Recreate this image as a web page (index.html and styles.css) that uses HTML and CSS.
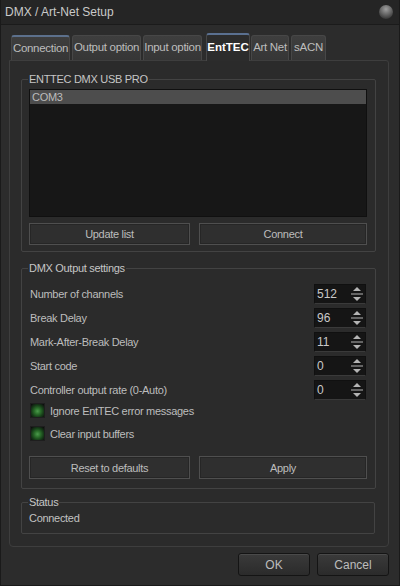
FILE: index.html
```html
<!DOCTYPE html>
<html>
<head>
<meta charset="utf-8">
<link rel="stylesheet" href="styles.css">
</head>
<body>
<div class="window">
  <div class="titlebar">
    <span class="title">DMX / Art-Net Setup</span>
    <span class="knob"></span>
  </div>
  <div class="tabs">
    <div class="tab hot t-conn">Connection</div>
    <div class="tab t-out">Output option</div>
    <div class="tab t-in">Input option</div>
    <div class="tab active t-ent">EntTEC</div>
    <div class="tab t-art">Art Net</div>
    <div class="tab t-sacn">sACN</div>
  </div>
  <div class="panel">
    <fieldset class="group g-usb">
      <legend>ENTTEC DMX USB PRO</legend>
      <div class="listbox">
        <div class="item sel">COM3</div>
      </div>
      <div class="btnrow">
        <button class="btn">Update list</button>
        <button class="btn">Connect</button>
      </div>
    </fieldset>
    <fieldset class="group g-dmx">
      <legend>DMX Output settings</legend>
      <div class="rows">
        <div class="row"><span class="label">Number of channels</span><div class="spin"><span class="val">512</span><svg class="arrows" width="14" height="18" viewBox="0 0 14 18"><polygon points="7,2 3,6 11,6"/><rect x="1" y="8.5" width="12" height="1"/><polygon points="3,12 11,12 7,16"/></svg></div></div>
        <div class="row"><span class="label">Break Delay</span><div class="spin"><span class="val">96</span><svg class="arrows" width="14" height="18" viewBox="0 0 14 18"><polygon points="7,2 3,6 11,6"/><rect x="1" y="8.5" width="12" height="1"/><polygon points="3,12 11,12 7,16"/></svg></div></div>
        <div class="row"><span class="label">Mark-After-Break Delay</span><div class="spin"><span class="val">11</span><svg class="arrows" width="14" height="18" viewBox="0 0 14 18"><polygon points="7,2 3,6 11,6"/><rect x="1" y="8.5" width="12" height="1"/><polygon points="3,12 11,12 7,16"/></svg></div></div>
        <div class="row"><span class="label">Start code</span><div class="spin"><span class="val">0</span><svg class="arrows" width="14" height="18" viewBox="0 0 14 18"><polygon points="7,2 3,6 11,6"/><rect x="1" y="8.5" width="12" height="1"/><polygon points="3,12 11,12 7,16"/></svg></div></div>
        <div class="row"><span class="label">Controller output rate (0-Auto)</span><div class="spin"><span class="val">0</span><svg class="arrows" width="14" height="18" viewBox="0 0 14 18"><polygon points="7,2 3,6 11,6"/><rect x="1" y="8.5" width="12" height="1"/><polygon points="3,12 11,12 7,16"/></svg></div></div>
      </div>
      <div class="checks">
        <div class="check"><span class="box"></span><span>Ignore EntTEC error messages</span></div>
        <div class="check"><span class="box"></span><span>Clear input buffers</span></div>
      </div>
      <div class="btnrow btnrow2">
        <button class="btn">Reset to defaults</button>
        <button class="btn">Apply</button>
      </div>
    </fieldset>
    <fieldset class="group g-status">
      <legend>Status</legend>
      <div class="status">Connected</div>
    </fieldset>
  </div>
  <div class="footer">
    <button class="fbtn">OK</button>
    <button class="fbtn">Cancel</button>
  </div>
</div>
</body>
</html>
```
FILE: styles.css
```css
* { box-sizing: border-box; }
html, body { margin: 0; padding: 0; background: #2b2b2b; }
body { font-family: "Liberation Sans", Arial, sans-serif; font-size: 11px; color: #bdbdbd; letter-spacing: -0.3px; }

.window {
  width: 400px;
  height: 586px;
  background: #2c2c2c;
  border: 1px solid #1a1a1a;
  border-top: none;
  display: flex;
  flex-direction: column;
}

.titlebar {
  height: 25px;
  background: #252525;
  border-bottom: 1px solid #1b1b1b;
  display: flex;
  align-items: center;
  justify-content: space-between;
  padding: 0 4px 0 4px;
}
.title { font-size: 12px; color: #cacaca; letter-spacing: 0; }
.knob {
  width: 14px; height: 14px; border-radius: 50%;
  background: radial-gradient(circle at 50% 30%, #a0a0a0 0, #666 45%, #383838 80%);
  margin-right: 2px;
}

.tabs {
  display: flex;
  align-items: flex-end;
  height: 27px;
  margin-top: 8px;
  padding-left: 10px;
  position: relative;
  z-index: 1;
}
.tab {
  height: 25px;
  line-height: 23px;
  text-align: center;
  border: 1px solid #474747;
  border-bottom: none;
  border-radius: 3px 3px 0 0;
  background: linear-gradient(#3e3e3e, #363636);
  color: #bdbdbd;
  margin-right: 2px;
  white-space: nowrap;
  font-size: 11.5px;
}
.tab.hot { border-top: 2px solid #5c708c; line-height: 22px; }
.tab.active {
  height: 28px;
  margin-bottom: -1px;
  background: #2c2c2c;
  border-top: 2px solid #5a7090;
  color: #ffffff;
  font-weight: bold;
  line-height: 24px;
  margin-left: 2px;
  margin-right: 1px;
  letter-spacing: 0;
}
.t-conn { width: 59px; }
.t-out { width: 69px; }
.t-in { width: 59px; }
.t-ent { width: 44px; }
.t-art { width: 38px; }
.t-sacn { width: 35px; }

.panel {
  margin-left: 8px;
  width: 380px;
  height: 487px;
  border: 1px solid #3e3e3e;
  border-radius: 0 3px 4px 4px;
  background: #2b2b2b;
  padding: 12px 12px 0 11px;
  display: flex;
  flex-direction: column;
}

.group {
  margin: 0;
  width: 355px;
  min-inline-size: 0;
  border: 1px solid #434343;
  border-radius: 2px;
  padding: 3px 8px 6px 7px;
}
.group legend {
  padding: 0 1px;
  margin-left: -1px;
  line-height: 13px;
  color: #c6c6c6;
}

.listbox {
  height: 128px;
  background: #171717;
  border: 1px solid #101010;
}
.item { height: 14px; line-height: 14px; padding-left: 2px; color: #bcbcbc; }
.item.sel { background: #4d4d4d; }

.btnrow {
  margin-top: 6px;
  display: grid;
  grid-template-columns: 161px 1fr;
  gap: 9px;
}
.btn {
  height: 22px;
  font-family: inherit;
  font-size: 11px;
  letter-spacing: -0.3px;
  color: #bdbdbd;
  background: #2f2f2f;
  border: 1px solid #4f4f4f;
  box-shadow: inset 0 0 0 1px #262626;
  padding: 0;
}

.g-dmx { margin-top: 10px; padding-top: 9px; padding-bottom: 9px; }
.rows { display: flex; flex-direction: column; gap: 4px; }
.row {
  height: 20px;
  display: flex;
  align-items: center;
  justify-content: space-between;
  padding-left: 1px;
}
.spin {
  width: 52px;
  height: 20px;
  margin-right: 1px;
  background: #151515;
  border: 1px solid #101010;
  border-bottom-color: #3a3a3a;
  display: flex;
  align-items: center;
  justify-content: space-between;
  padding: 0 1px 0 2px;
}
.val { color: #c8c8c8; font-size: 12px; letter-spacing: 0; }
.arrows { fill: #b4b4b4; }

.checks { margin-top: 3px; display: flex; flex-direction: column; gap: 8px; }
.check { display: flex; align-items: center; height: 15px; padding-left: 1px; }
.box {
  width: 15px; height: 15px;
  margin-right: 5px;
  border: 1px solid #1e1e1e;
  background: radial-gradient(circle at 50% 55%, #4c9a4c 0, #2a6e2a 3px, #163c18 6px, #0e0e0e 9px);
}
.btnrow2 { margin-top: 15px; }
.btnrow2 .btn { height: 23px; }

.g-status { margin-top: 7px; width: 354px; padding-top: 3px; padding-bottom: 8px; }
.status { line-height: 13px; color: #c2c2c2; }

.footer {
  display: flex;
  justify-content: flex-end;
  gap: 7px;
  margin-top: 6px;
  padding-right: 10px;
}
.fbtn {
  width: 72px;
  height: 23px;
  font-family: inherit;
  font-size: 12px;
  color: #bdbdbd;
  border: 1px solid #141414;
  border-radius: 3px;
  background: linear-gradient(#3a3a3a, #2b2b2b);
  box-shadow: inset 0 1px 0 #4a4a4a;
  padding: 0;
}
```
